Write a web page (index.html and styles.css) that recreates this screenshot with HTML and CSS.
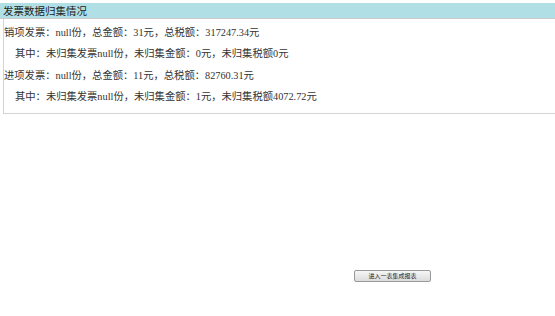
FILE: index.html
```html
<!DOCTYPE html>
<html lang="zh-CN">
  <head>
    <meta charset="UTF-8" />
    <title>发票数据归集情况</title>
    <link rel="stylesheet" href="styles.css">
  </head>
  <body>
    <div class="title">发票数据归集情况</div>
    <div class="box">
      <p>销项发票：null份，总金额：31元，总税额：317247.34元</p>
      <p class="sub">其中：未归集发票null份，未归集金额：0元，未归集税额0元</p>
      <p>进项发票：null份，总金额：11元，总税额：82760.31元</p>
      <p class="sub">其中：未归集发票null份，未归集金额：1元，未归集税额4072.72元</p>
    </div>
    <div class="actions">
      <button>进入一表集成报表</button>
    </div>
  </body>
</html>
```

FILE: styles.css
```css
body {
  margin: 0;
  padding-top: 3px;
  font-family: "Liberation Serif", "Noto Sans CJK SC", serif;
  font-size: 10.3px;
  color: #333;
  background-color: white;
}
.title {
  background-color: #b0e0e6;
  height: 15px;
  line-height: 15px;
  padding-left: 3px;
  border-bottom: 1px solid #ccc;
  font-family: "Noto Sans CJK SC", sans-serif;
  font-size: 10.5px;
  color: #222;
}
.box {
  margin-left: 3px;
  border-left: 1px solid #d4d4d4;
  border-bottom: 1px solid #d4d4d4;
  padding: 3px 0 6px 0;
}
.box p {
  margin: 0;
  line-height: 21.3px;
}
.box .sub {
  padding-left: 11px;
}
.actions {
  margin-top: 155px;
  padding-left: 354px;
}
button {
  width: 77px;
  height: 12px;
  padding: 0;
  font-family: "Noto Sans CJK SC", sans-serif;
  font-size: 6px;
  line-height: 10px;
  color: #222;
  border: 1px solid #999;
  border-radius: 2px;
  background: linear-gradient(#f6f6f6, #dcdcdc);
}
```
